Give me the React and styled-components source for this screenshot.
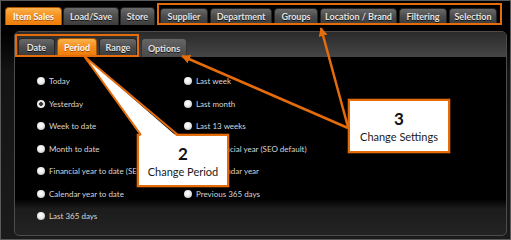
import React from 'react';
import styled, { css, createGlobalStyle } from 'styled-components';

const ORANGE = '#e46c0a';

const Global = createGlobalStyle`
  html, body { margin: 0; padding: 0; background: #000; }
  #root { width: 511px; height: 240px; }
`;

const Page = styled.div`
  position: relative;
  width: 511px;
  height: 240px;
  overflow: hidden;
  font-family: Lato, "Open Sans", sans-serif;
`;

const Frame = styled.div`
  box-sizing: border-box;
  width: 100%;
  height: 100%;
  border: 1px solid #5a5a5a;
  background: linear-gradient(180deg, #000 0, #000 30px, #141414 70px, #1b1b1b 100%);
  display: flex;
  flex-direction: column;
`;

const TopBar = styled.div`
  flex: none;
  box-sizing: content-box;
  display: flex;
  align-items: flex-end;
  height: 22px;
  padding: 2px 0 0 4px;
  gap: 1px;
`;

const TabGroup = styled.div`
  display: flex;
  align-items: flex-end;
  gap: 2px;
  ${p => p.$highlight && css`
    border: 2px solid ${ORANGE};
    padding: ${p.$pad};
  `}
  margin-left: ${p => p.$ml || 0}px;
`;

const Tab = styled.div`
  box-sizing: border-box;
  flex: none;
  width: ${p => p.$w}px;
  height: ${p => p.$h}px;
  display: flex;
  align-items: center;
  justify-content: center;
  font: 700 9px/1 Lato, "Open Sans", sans-serif;
  color: #e4e4e4;
  white-space: nowrap;
  border-radius: 4px 4px 0 0;
  border: 1px solid #242424;
  border-bottom: none;
  background: linear-gradient(180deg, #6a6a6a 0%, #4d4d4d 50%, #3d3d3d 100%);
  text-shadow: 0 1px 0 #111;
  margin-left: ${p => p.$ml || 0}px;
  ${p => p.$light && css`
    background: linear-gradient(180deg, #666 0%, #565656 50%, #4a4a4a 100%);
    border-color: #333;
  `}
  ${p => p.$active && css`
    background: linear-gradient(180deg, #fbb24f 0%, #f5921f 45%, #ee7c0a 100%);
    color: #fff;
    border-color: #a85300;
    text-shadow: 0 1px 0 rgba(120, 50, 0, 0.6);
  `}
`;

const Panel = styled.div`
  flex: 1;
  margin: 6px 3px 3px 13px;
  border: 1px solid #4c4c4c;
  border-radius: 5px;
  overflow: hidden;
  display: flex;
  flex-direction: column;
  background: linear-gradient(180deg, #000 0, #000 calc(100% - 36px), #1c1c1c calc(100% - 26px), #232323 100%);
`;

const PanelHeader = styled.div`
  flex: none;
  box-sizing: border-box;
  height: 25px;
  padding-top: 2px;
  display: flex;
  align-items: flex-end;
  background: linear-gradient(180deg, #2a2a2a 0%, #383838 50%, #454545 100%);
`;

const Body = styled.div`
  display: flex;
  padding: 13px 0 0 22px;
`;

const Column = styled.div`
  display: flex;
  flex-direction: column;
  width: ${p => p.$w ? `${p.$w}px` : 'auto'};
`;

const Option = styled.label`
  height: 22.5px;
  display: flex;
  align-items: center;
  gap: 4px;
  font: 400 8px/1 Lato, "Open Sans", sans-serif;
  color: #d6d6d6;
  white-space: nowrap;
`;

const Radio = styled.span`
  flex: none;
  width: 8px;
  height: 8px;
  border-radius: 50%;
  background: radial-gradient(circle at 45% 40%, #fff 0%, #ececec 45%, #a0a0a0 100%);
  ${p => p.$checked && css`
    background: radial-gradient(circle at 50% 50%, #3a3a3a 0%, #3a3a3a 28%, #d8d8d8 38%, #f4f4f4 60%, #9a9a9a 100%);
  `}
`;

const Callout = styled.div`
  position: absolute;
  box-sizing: border-box;
  left: ${p => p.$x}px;
  top: ${p => p.$y}px;
  width: ${p => p.$w}px;
  height: ${p => p.$h}px;
  background: #fff;
  border: 2px solid ${ORANGE};
  box-shadow: 0 0 0 0.5px #8a3d00;
  display: flex;
  flex-direction: column;
  align-items: center;
  padding-top: 8px;
  color: #111;
`;

const CalloutNum = styled.div`
  font: 700 17px/20px Lato, "Open Sans", sans-serif;
`;

const CalloutText = styled.div`
  margin-top: 1px;
  font: 400 11px/14px Lato, "Open Sans", sans-serif;
  color: #1a1a1a;
  white-space: nowrap;
`;

const Overlay = styled.svg`
  position: absolute;
  left: 0;
  top: 0;
  pointer-events: none;
`;

const topTabs = [
  ['Supplier', 48], ['Department', 62], ['Groups', 44],
  ['Location / Brand', 77], ['Filtering', 48], ['Selection', 48],
];

const left = ['Today', 'Yesterday', 'Week to date', 'Month to date',
  'Financial year to date (SEO default)', 'Calendar year to date', 'Last 365 days'];
const right = ['Last week', 'Last month', 'Last 13 weeks',
  'Last financial year (SEO default)', 'Last calendar year', 'Previous 365 days'];

export default function App() {
  return (
    <Page>
      <Global />
      <Frame>
        <TopBar>
          <TabGroup>
            <Tab $w={57} $h={18} $active>Item Sales</Tab>
            <Tab $w={56} $h={18} $ml={-1}>Load/Save</Tab>
            <Tab $w={35} $h={18} $ml={-1}>Store</Tab>
          </TabGroup>
          <TabGroup $highlight $pad="3px 3px 0 1px" $ml={1}>
            {topTabs.map(([t, w]) => <Tab key={t} $w={w} $h={15}>{t}</Tab>)}
          </TabGroup>
        </TopBar>
        <Panel>
          <PanelHeader>
            <TabGroup $highlight $pad="2px 0 0 1px">
              <Tab $w={37} $h={17}>Date</Tab>
              <Tab $w={40} $h={17} $active>Period</Tab>
              <Tab $w={38} $h={17}>Range</Tab>
            </TabGroup>
            <Tab $w={46} $h={19} $ml={2} $light>Options</Tab>
          </PanelHeader>
          <Body>
            <Column $w={147}>
              {left.map(t => (
                <Option key={t}><Radio $checked={t === 'Yesterday'} />{t}</Option>
              ))}
            </Column>
            <Column>
              {right.map(t => (
                <Option key={t}><Radio />{t}</Option>
              ))}
            </Column>
          </Body>
        </Panel>
      </Frame>

      <Callout $x={137} $y={134} $w={92} $h={53}>
        <CalloutNum>2</CalloutNum>
        <CalloutText>Change Period</CalloutText>
      </Callout>
      <Callout $x={348} $y={99} $w={102} $h={54}>
        <CalloutNum>3</CalloutNum>
        <CalloutText>Change Settings</CalloutText>
      </Callout>

      <Overlay width="511" height="240" viewBox="0 0 511 240">
        <defs>
          <marker id="ah" viewBox="0 0 10 10" refX="9" refY="5" markerWidth="9" markerHeight="9"
            markerUnits="userSpaceOnUse" orient="auto">
            <path d="M0 0 L10 5 L0 10 z" fill={ORANGE} />
          </marker>
        </defs>
        <polygon points="84,56 141.5,137 177.5,137" fill="#fff" />
        <line x1="84" y1="56" x2="141" y2="135" stroke={ORANGE} strokeWidth="2" />
        <line x1="84" y1="56" x2="178" y2="135" stroke={ORANGE} strokeWidth="2" />
        <line x1="348" y1="128" x2="182" y2="56" stroke={ORANGE} strokeWidth="2.5" markerEnd="url(#ah)" />
        <line x1="348" y1="127" x2="321" y2="28" stroke={ORANGE} strokeWidth="2.5" markerEnd="url(#ah)" />
      </Overlay>
    </Page>
  );
}
